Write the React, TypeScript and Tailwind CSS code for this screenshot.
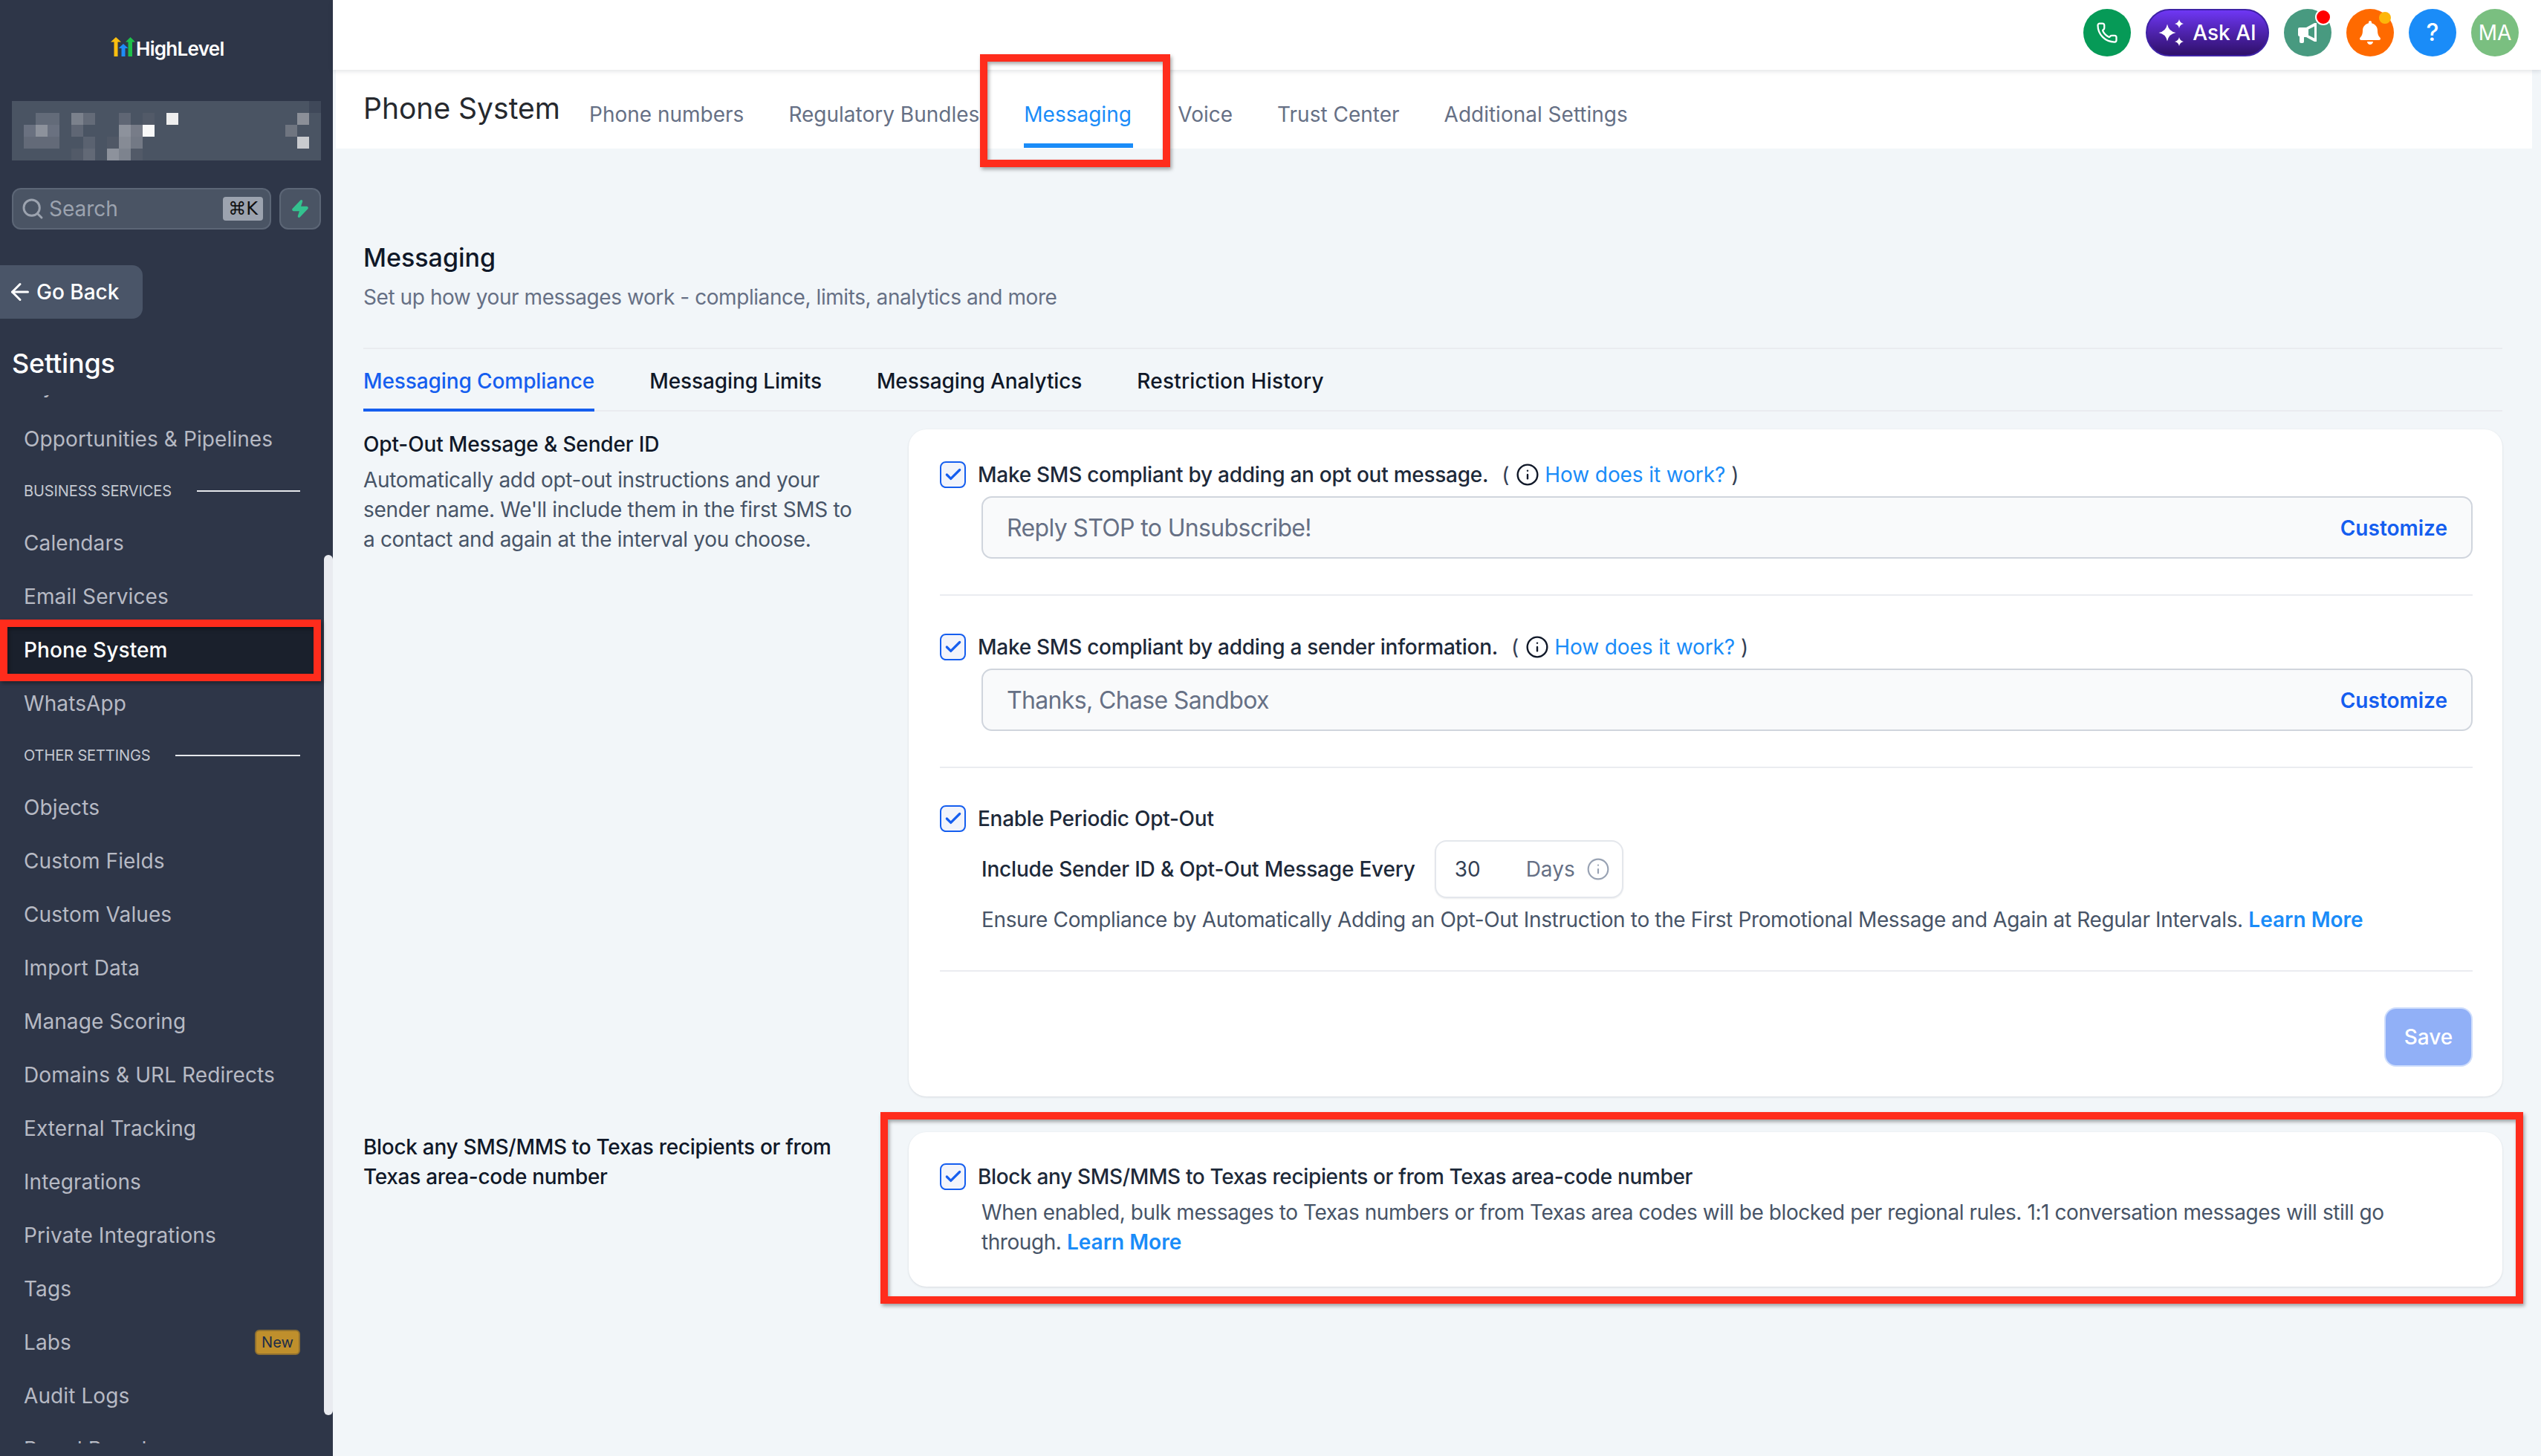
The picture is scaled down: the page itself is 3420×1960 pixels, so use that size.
import { ArrowLeft, Phone, Search, Zap, Check, Info } from "lucide-react";
import { FaBell } from "react-icons/fa";

const mosaic: [number, number, string][] = [
  [0, 25, "#3f4859"],
  [1, 2, "#636b79"], [1, 3, "#636b79"], [1, 5, "#7b818c"], [1, 6, "#646b78"], [1, 9, "#5f6674"], [1, 11, "#525a68"], [1, 13, "#eeeeee"], [1, 24, "#8b8f98"],
  [2, 1, "#6a7180"], [2, 2, "#8d929c"], [2, 3, "#6a7180"], [2, 5, "#5f6674"], [2, 9, "#8d929c"], [2, 10, "#777c88"], [2, 11, "#f8f8f8"], [2, 23, "#6f7580"],
  [3, 1, "#636a78"], [3, 2, "#636a78"], [3, 3, "#636a78"], [3, 6, "#5a6270"], [3, 8, "#505866"], [3, 9, "#868b95"], [3, 10, "#737985"], [3, 24, "#c9cbcf"],
  [4, 5, "#525a68"], [4, 6, "#626976"], [4, 8, "#8d929c"], [4, 9, "#7d838e"], [4, 10, "#525a68"],
];

const cells = Array.from({ length: 5 * 26 }, (_, i) => {
  const hit = mosaic.find(([r, c]) => r === Math.floor(i / 26) && c === i % 26);
  return hit ? hit[2] : "#4a5463";
});

const NavItem = ({ label, active, badge }: { label: string; active?: boolean; badge?: boolean }) => (
  <div className={`flex h-[72px] w-[432px] items-center justify-between pl-[32px] pr-[28px] text-[28px] tracking-[0.1px] ${active ? "bg-[#1a202c] text-white font-medium" : "text-[#b7bac4]"}`}>
    <span>{label}</span>
    {badge && (
      <span className="flex h-[34px] w-[61px] items-center justify-center rounded-[6px] border-2 border-[#8f7030] bg-[#bf8f2c] text-[20px] text-[#1c2c48]">
        New
      </span>
    )}
  </div>
);

const NavSection = ({ label }: { label: string }) => (
  <div className="flex h-[68px] w-[432px] items-center gap-[34px] pl-[32px] pr-[28px]">
    <span className="text-[20px] tracking-[-0.1px] whitespace-nowrap text-[#c4c8d0]">{label}</span>
    <div className="h-[2px] flex-1 bg-[#e5e7eb]" />
  </div>
);

const Sidebar = () => (
  <aside className="relative flex h-full w-[448px] shrink-0 flex-col bg-[#2e3648]">
    <div className="flex h-[136px] items-start pl-[149px] pt-[49px]">
      <svg width="34" height="28" viewBox="0 0 34 28">
        <path d="M7 1l7 6.500h-4.500V27h-5V7.500H0z" fill="#fbbf0f" />
        <path d="M17 10l6.500 6h-4v11h-5V16h-4z" fill="#1e8cf5" />
        <path d="M26.500 1l6.500 6.500h-4V27h-5.500V7.500H20z" fill="#1dc04a" />
      </svg>
      <span className="mt-[-3px] text-[26px] font-semibold tracking-[-0.7px] text-white">HighLevel</span>
    </div>

    <div className="mx-[16px] grid h-[80px] w-[416px] grid-cols-[repeat(26,16px)] grid-rows-[repeat(5,16px)]">
      {cells.map((color, i) => (
        <div key={i} style={{ backgroundColor: color }} />
      ))}
    </div>

    <div className="mt-[37px] flex gap-[11px] px-[16px]">
      <div className="flex h-[56px] w-[349px] items-center rounded-[12px] border-2 border-[#5c6676] bg-[#4a5464] pl-[10px] pr-[9px]">
        <Search size={32} strokeWidth={2.200} className="text-[#9ca3af]" />
        <span className="ml-[6px] flex-1 text-[28px] text-[#9ca3af]">Search</span>
        <span className="flex h-[32px] w-[54px] items-center justify-center rounded-[4px] bg-[#9ca3af] font-['DejaVu_Sans',sans-serif] text-[24px] text-[#101010]">⌘K</span>
      </div>
      <div className="flex h-[56px] w-[56px] items-center justify-center rounded-[12px] border-2 border-[#5c6676] bg-[#4a5464]">
        <Zap size={26} fill="#34c28f" stroke="#34c28f" />
      </div>
    </div>

    <div className="mt-[48px] flex h-[72px] w-[192px] items-center rounded-r-[14px] bg-[#4a5568] pl-[9px] text-[28px] font-medium text-white">
      <ArrowLeft size={36} strokeWidth={2} />
      <span className="ml-[4px]">Go Back</span>
    </div>

    <div className="mt-[36px] pl-[16px] text-[36px] leading-[48px] font-medium tracking-[-0.2px] text-white">Settings</div>

    <nav className="mt-[19px] h-[1411px] overflow-hidden">
      <div className="mt-[-49px]">
        <NavItem label="My Profile" />
        <NavItem label="Opportunities & Pipelines" />
        <NavSection label="BUSINESS SERVICES" />
        <NavItem label="Calendars" />
        <NavItem label="Email Services" />
        <NavItem label="Phone System" active />
        <NavItem label="WhatsApp" />
        <NavSection label="OTHER SETTINGS" />
        <NavItem label="Objects" />
        <NavItem label="Custom Fields" />
        <NavItem label="Custom Values" />
        <NavItem label="Import Data" />
        <NavItem label="Manage Scoring" />
        <NavItem label="Domains & URL Redirects" />
        <NavItem label="External Tracking" />
        <NavItem label="Integrations" />
        <NavItem label="Private Integrations" />
        <NavItem label="Tags" />
        <NavItem label="Labs" badge />
        <NavItem label="Audit Logs" />
        <NavItem label="Brand Boards" />
      </div>
    </nav>

    <div className="absolute top-[747px] right-0 h-[1158px] w-[12px] rounded-full bg-[#e9ebf0]" />
  </aside>
);

const TopBar = () => (
  <div className="relative z-10 flex h-[94px] items-start justify-end gap-[20px] bg-white pt-[12px] pr-[30px] shadow-[0_2px_6px_rgba(16,24,40,0.12)]">
    <div className="flex h-[64px] w-[64px] items-center justify-center rounded-full bg-[#069a57] text-white">
      <Phone size={30} strokeWidth={1.800} />
    </div>
    <div className="flex h-[64px] w-[166px] items-center justify-center gap-[10px] rounded-full border-2 border-[#3e22a5] bg-gradient-to-b from-[#6f37f5] to-[#2f106a] text-[28px] font-medium text-white">
      <svg width="36" height="36" viewBox="0 0 36 36" fill="white">
        <path d="M12 6.500Q13.800 16.200 23.500 18 13.800 19.800 12 29.500 10.200 19.800 .500 18 10.200 16.200 12 6.500z" />
        <path d="M28 0Q29 5 34 6 29 7 28 12 27 7 22 6 27 5 28 0z" />
        <path d="M28 24Q29 29 34 30 29 31 28 36 27 31 22 30 27 29 28 24z" />
      </svg>
      <span>Ask AI</span>
    </div>
    <div className="relative flex h-[64px] w-[64px] items-center justify-center rounded-full bg-[#489a80]">
      <svg width="28" height="28" viewBox="0 0 28 28" fill="white" fillRule="evenodd">
        <path d="M1 9a2 2 0 012-2h9l11-6h3v25h-3l-11-6H9v6a2 2 0 01-2 2H5a2 2 0 01-2-2v-7a2 2 0 01-2-2zM15 9.500v8l8 4V5.500z" />
      </svg>
      <span className="absolute top-0 right-0 h-[22px] w-[22px] rounded-full border-2 border-white bg-[#ff0000]" />
    </div>
    <div className="relative flex h-[64px] w-[64px] items-center justify-center rounded-full bg-[#ff6a00] text-white">
      <FaBell size={32} />
      <span className="absolute top-[4px] right-[4px] h-[16px] w-[16px] rounded-full bg-[#fdb60a]" />
    </div>
    <div className="flex h-[64px] w-[64px] items-center justify-center rounded-full bg-[#1a8cf8] text-[32px] font-medium text-white">?</div>
    <div className="flex h-[64px] w-[64px] items-center justify-center rounded-full bg-[#7abf80] text-[28px] text-white">MA</div>
  </div>
);

const TabBar = () => (
  <div className="ml-[4px] mr-[12px] flex h-[106px] bg-white pl-[37px]">
    <div className="mt-[28px] w-[264px] text-[39px] leading-[48px] whitespace-nowrap text-[#26292e]">Phone System</div>
    <div className="ml-[40px] flex gap-[60px] text-[28px] text-[#667085]">
      <div className="pt-[39px]">Phone numbers</div>
      <div className="pt-[39px]">Regulatory Bundles</div>
      <div className="mb-[1px] w-[147px] border-b-[6px] border-[#1a8cf8] pt-[39px] text-[#1a8cf8]">Messaging</div>
      <div className="pt-[39px]">Voice</div>
      <div className="pt-[39px]">Trust Center</div>
      <div className="pt-[39px]">Additional Settings</div>
    </div>
  </div>
);

const CheckBox = () => (
  <span className="flex h-[36px] w-[35px] shrink-0 items-center justify-center rounded-[8px] border-2 border-[#155eef] bg-[#f2f4fb] text-[#155eef]">
    <Check size={26} strokeWidth={3} />
  </span>
);

const HowItWorks = () => (
  <span className="ml-[2px] flex items-center font-normal text-[#344054]">
    <span>(</span>
    <Info size={32} strokeWidth={1.800} className="ml-[9px] text-[#101828]" />
    <span className="ml-[7px] tracking-[-0.1px] text-[#1a8cf8]">How does it work?</span>
    <span className="ml-[8px]">)</span>
  </span>
);

const MessageField = ({ value }: { value: string }) => (
  <div className="mt-[9px] ml-[56px] flex h-[84px] items-center justify-between rounded-[14px] border-2 border-[#d0d5dd] bg-[#f9fafb] pt-[2px] pr-[32px] pl-[32px]">
    <span className="text-[32px] tracking-[-0.65px] text-[#667085]">{value}</span>
    <span className="font-semibold text-[#155eef]">Customize</span>
  </div>
);

const Divider = () => <div className="my-[48px] h-[2px] bg-[#eaecf0]" />;

const Content = () => (
  <div className="pr-[52px] pl-[41px] text-[28px] leading-[40px]">
    <h2 className="mt-[123px] text-[34px] leading-[48px] font-medium text-[#101828]">Messaging</h2>
    <p className="mt-[9px] tracking-[-0.43px] text-[#667085]">Set up how your messages work - compliance, limits, analytics and more</p>
    <div className="mt-[48px] h-[2px] bg-[#eaecf0]" />

    <div className="flex h-[84px] gap-[74px] border-b-2 border-[#eaecf0] font-medium tracking-[-0.1px] text-[#101828]">
      <div className="h-[84px] border-b-4 border-[#155eef] pt-[23px] text-[#155eef]">Messaging Compliance</div>
      <div className="pt-[23px]">Messaging Limits</div>
      <div className="pt-[23px]">Messaging Analytics</div>
      <div className="pt-[23px] tracking-[0.2px]">Restriction History</div>
    </div>

    <div className="mt-[24px] flex">
      <div className="w-[734px] shrink-0">
        <div className="font-medium tracking-[-0.15px] text-[#101828]">Opt-Out Message &amp; Sender ID</div>
        <p className="mt-[8px] w-[665px] tracking-[-0.33px] text-[#475467]">
          Automatically add opt-out instructions and your sender name. We'll include them in the first SMS to a contact and again at the interval you choose.
        </p>
      </div>
      <div className="h-[898px] flex-1 rounded-[24px] bg-white pt-[41px] pr-[40px] pl-[42px] shadow-[0_1px_3px_rgba(16,24,40,0.12)]">
        <div className="flex items-center gap-[16px] font-medium text-[#1d2939]">
          <CheckBox />
          <span className="tracking-[-0.27px]">Make SMS compliant by adding an opt out message.</span>
          <HowItWorks />
        </div>
        <MessageField value="Reply STOP to Unsubscribe!" />
        <Divider />
        <div className="mt-[49px] flex items-center gap-[16px] font-medium text-[#1d2939]">
          <CheckBox />
          <span className="tracking-[-0.27px]">Make SMS compliant by adding a sender information.</span>
          <HowItWorks />
        </div>
        <MessageField value="Thanks, Chase Sandbox" />
        <Divider />
        <div className="flex items-center gap-[16px] font-medium text-[#1d2939]">
          <CheckBox />
          <span className="tracking-[-0.27px]">Enable Periodic Opt-Out</span>
        </div>
        <div className="mt-[9px] ml-[56px] flex items-center font-medium text-[#1d2939]">
          <span className="tracking-[-0.2px]">Include Sender ID &amp; Opt-Out Message Every</span>
          <div className="ml-[26px] flex h-[78px] w-[254px] items-center rounded-[16px] border-2 border-[#e4e7ec] bg-white pl-[25px] font-normal shadow-[0_1px_2px_rgba(16,24,40,0.08)]">
            <span className="text-[#344054]">30</span>
            <span className="ml-[61px] text-[#667085]">Days</span>
            <Info size={32} strokeWidth={1.600} className="ml-[15px] text-[#98a2b3]" />
          </div>
        </div>
        <p className="mt-[9px] ml-[56px] tracking-[-0.35px] text-[#475467]">
          Ensure Compliance by Automatically Adding an Opt-Out Instruction to the First Promotional Message and Again at Regular Intervals. <span className="font-semibold tracking-normal text-[#1a8cf8]">Learn More</span>
        </p>
        <Divider />
        <div className="flex justify-end">
          <div className="flex h-[80px] w-[119px] items-center justify-center rounded-[16px] border-2 border-[#cfdefc] bg-[#91b0f7] font-medium text-white">Save</div>
        </div>
      </div>
    </div>

    <div className="mt-[48px] flex">
      <div className="w-[734px] shrink-0 font-medium tracking-[-0.3px] text-[#101828]">
        <p className="w-[680px]">Block any SMS/MMS to Texas recipients or from Texas area-code number</p>
      </div>
      <div className="h-[208px] flex-1 rounded-[24px] bg-white pt-[40px] pr-[40px] pl-[42px] shadow-[0_1px_3px_rgba(16,24,40,0.12)]">
        <div className="flex items-center gap-[16px] font-medium text-[#1d2939]">
          <CheckBox />
          <span className="tracking-[-0.35px]">Block any SMS/MMS to Texas recipients or from Texas area-code number</span>
        </div>
        <p className="mt-[8px] ml-[56px] w-[1950px] tracking-[-0.43px] text-[#475467]">
          When enabled, bulk messages to Texas numbers or from Texas area codes will be blocked per regional rules. 1:1 conversation messages will still go through. <span className="font-semibold tracking-normal text-[#1a8cf8]">Learn More</span>
        </p>
      </div>
    </div>
  </div>
);

// red annotation frames drawn over the screenshot
const Marker = ({ className }: { className: string }) => (
  <div className={`pointer-events-none absolute z-20 border-[10px] border-[#ff2c1c] shadow-[2px_3px_5px_rgba(0,0,0,0.35),inset_2px_3px_5px_rgba(0,0,0,0.35)] ${className}`} />
);

export default function App() {
  return (
    <div className="relative flex h-[1960px] w-[3420px] overflow-hidden bg-[#f2f6f9] font-[Inter,'DejaVu_Sans',sans-serif]">
      <Sidebar />
      <main className="min-w-0 flex-1">
        <TopBar />
        <TabBar />
        <Content />
      </main>
      <Marker className="top-[73px] left-[1319px] h-[152px] w-[256px]" />
      <Marker className="top-[834px] left-0 h-[83px] w-[432px]" />
      <Marker className="top-[1497px] left-[1185px] h-[258px] w-[2211px]" />
    </div>
  );
}
